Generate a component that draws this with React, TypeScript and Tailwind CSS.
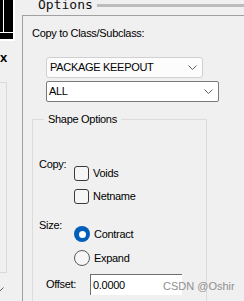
import React from "react";

function Chevron({ color = "#606060" }: { color?: string }) {
  return (
    <svg width="9" height="5" viewBox="0 0 9 5" className="block shrink-0">
      <path d="M0.5 0.5 L4.5 4.5 L8.5 0.5" fill="none" stroke={color} strokeWidth="1" />
    </svg>
  );
}

function Checkbox({ label }: { label: string }) {
  return (
    <div className="flex items-center h-[15px] gap-[4px]">
      <div className="w-[15px] h-[15px] rounded-[3px] border border-[#3a3a3a] bg-[#f6f6f6] shrink-0" />
      <span className="leading-[13px]">{label}</span>
    </div>
  );
}

function Radio({ label, checked }: { label: string; checked?: boolean }) {
  return (
    <div className="flex items-center h-[16px] gap-[4px]">
      {checked ? (
        <div className="w-[16px] h-[16px] rounded-full bg-[#005fb8] flex items-center justify-center shrink-0">
          <div className="w-[7px] h-[7px] rounded-full bg-white" />
        </div>
      ) : (
        <div className="w-[16px] h-[16px] rounded-full border border-[#5a5a5a] bg-[#f6f6f6] shrink-0" />
      )}
      <span className="leading-[13px]">{label}</span>
    </div>
  );
}

export default function App() {
  return (
    <div className="relative w-[244px] h-[301px] overflow-hidden bg-[#f0f0f0] flex font-['Liberation_Sans',Arial,sans-serif] text-[11px] tracking-[-0.3px] text-black">
      {/* left strip */}
      <div className="w-[22px] shrink-0 flex flex-col">
        <svg width="15" height="41" viewBox="0 0 15 41" className="block shrink-0">
          <rect x="0" y="0" width="15" height="41" fill="#ffffff" />
          <rect x="0" y="0" width="13" height="39" fill="#000000" />
          <rect x="3" y="0" width="1" height="33" fill="#ffffff" />
          <rect x="0" y="32" width="13" height="1" fill="#ffffff" />
        </svg>
        <div className="mt-[10px] shrink-0 leading-[13px] text-[13px] font-bold tracking-normal">x</div>
        <div className="mt-[18px] shrink-0 w-[7px] h-[191px] border-t border-r border-b border-[#d9d9d9]" />
        <div className="mt-[14px] shrink-0 -ml-[4px]">
          <svg width="8" height="5" viewBox="0 0 8 5" className="block">
            <path d="M0.5 0.5 L4 4 L7.5 0.5" fill="none" stroke="#606060" strokeWidth="1" />
          </svg>
        </div>
      </div>

      {/* right area */}
      <div className="flex-1 min-w-0 flex flex-col">
        <div className="h-[15px] shrink-0 flex items-start overflow-hidden">
          <span className="ml-[16px] -mt-[2px] leading-[13px] text-[13px] tracking-normal font-['DejaVu_Sans_Mono',monospace] text-[#111]">
            Options
          </span>
          <div className="ml-[4px] mt-[4px] h-[3px] flex-1 bg-[#bcbcbc]" />
        </div>

        <div className="flex-1 shrink-0 border-l border-t border-[#a0a0a0] pt-[11px] pl-[9px] flex flex-col">
          <div className="leading-[13px]">Copy to Class/Subclass:</div>

          <div className="mt-[17px] ml-[14px] w-[157px] h-[21px] shrink-0 rounded-[3px] border border-[#d0d0d0] bg-[#fcfcfc] flex items-center justify-between pl-[3px] pr-[5px]">
            <span className="leading-[13px]">PACKAGE KEEPOUT</span>
            <Chevron />
          </div>

          <div className="mt-[3px] ml-[14px] w-[173px] h-[21px] shrink-0 rounded-[2px] border border-[#7a7a7a] bg-white flex items-center justify-between pl-[2px] pr-[5px]">
            <span className="leading-[13px]">ALL</span>
            <Chevron />
          </div>

          <fieldset className="mt-[11px] w-[175px] shrink-0 border border-[#dcdcdc] pl-[6px] pb-[20px]">
            <legend className="ml-[5px] px-[4px] leading-[13px]">Shape Options</legend>

            <div className="mt-[32px] flex">
              <div className="w-[35px] leading-[13px]">Copy:</div>
              <div className="mt-[8px] flex flex-col gap-[8px]">
                <Checkbox label="Voids" />
                <Checkbox label="Netname" />
              </div>
            </div>

            <div className="mt-[15px] flex">
              <div className="w-[35px] leading-[13px]">Size:</div>
              <div className="mt-[7px] flex flex-col gap-[8px]">
                <Radio label="Contract" checked />
                <Radio label="Expand" />
              </div>
            </div>

            <div className="mt-[8px] flex items-center h-[21px]">
              <div className="ml-[7px] w-[44px] leading-[13px]">Offset:</div>
              <div className="w-[92px] h-[21px] bg-white border-t border-l border-[#6e6e6e] border-r-[#e3e3e3] border-b-[#e3e3e3] flex items-center pl-[2px]">
                <span className="leading-[13px]">0.0000</span>
              </div>
            </div>
          </fieldset>
        </div>
      </div>

      <div className="absolute left-[163px] top-[280px] leading-[13px] text-[11px] tracking-normal text-[#8f8f8f] font-['Liberation_Sans',Arial,sans-serif]">
        CSDN @Oshir
      </div>
    </div>
  );
}
